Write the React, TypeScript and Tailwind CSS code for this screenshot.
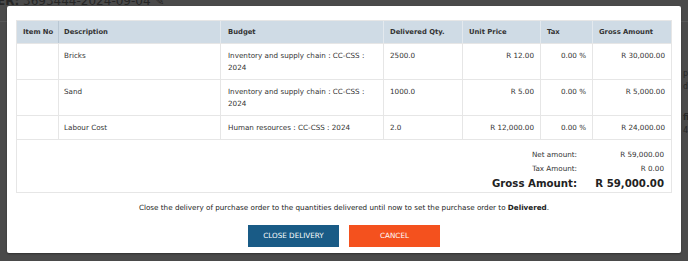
import React from 'react';

interface LineItem {
  itemNo: string;
  description: string;
  budget: string;
  qty: string;
  unitPrice: string;
  tax: string;
  gross: string;
}

const items: LineItem[] = [
  {
    itemNo: '',
    description: 'Bricks',
    budget: 'Inventory and supply chain : CC-CSS : 2024',
    qty: '2500.0',
    unitPrice: 'R 12.00',
    tax: '0.00 %',
    gross: 'R 30,000.00',
  },
  {
    itemNo: '',
    description: 'Sand',
    budget: 'Inventory and supply chain : CC-CSS : 2024',
    qty: '1000.0',
    unitPrice: 'R 5.00',
    tax: '0.00 %',
    gross: 'R 5,000.00',
  },
  {
    itemNo: '',
    description: 'Labour Cost',
    budget: 'Human resources : CC-CSS : 2024',
    qty: '2.0',
    unitPrice: 'R 12,000.00',
    tax: '0.00 %',
    gross: 'R 24,000.00',
  },
];

const font = { fontFamily: '"DejaVu Sans", sans-serif' };

const cols = 'grid grid-cols-[42px_162px_163px_79px_78px_52px_78px]';

export default function App() {
  return (
    <div className="relative h-[261px] w-[688px] overflow-hidden bg-[#4a4a4a]" style={font}>
      {/* page behind the overlay */}
      <div className="absolute left-[-3px] top-[-6px] text-[12px] leading-[14px] text-[#262626] whitespace-nowrap">
        <span className="font-bold">ER:</span> 3693444-2024-09-04 ✎
      </div>
      <div className="absolute left-0 top-[21px] h-px w-full bg-[#575757]" />
      <div className="absolute left-[683px] top-[67px] text-[8px] leading-[13px] text-[#262626]">
        <div>pa</div>
        <div>de</div>
        <div className="mt-[18px] font-bold">fi</div>
        <div>4</div>
      </div>

      {/* modal */}
      <div className="absolute left-[7px] top-[6px] w-[674px] h-[247px] rounded-[2px] bg-white shadow-[0_1px_2px_rgba(0,0,0,0.35)] px-[9px] pt-[14px]">
        <div className="border border-[#e6e6e6] text-[#333] text-[7.2px]">
          <div className={`${cols} bg-[#cfdbe5] font-bold text-[6.8px] leading-[12px] whitespace-nowrap`}>
            <div className="px-[6px] py-[5px] border-r border-[#b9c7d3]">Item No</div>
            <div className="px-[5px] py-[5px] border-r border-[#e3e9ee]">Description</div>
            <div className="px-[7px] py-[5px] border-r border-[#e3e9ee]">Budget</div>
            <div className="px-[6px] py-[5px] border-r border-[#e3e9ee]">Delivered Qty.</div>
            <div className="px-[6px] py-[5px] border-r border-[#e3e9ee]">Unit Price</div>
            <div className="px-[6px] py-[5px] border-r border-[#e3e9ee]">Tax</div>
            <div className="px-[6px] py-[5px]">Gross Amount</div>
          </div>
          {items.map((it) => (
            <div key={it.description} className={`${cols} border-t border-[#e6e6e6] leading-[12px]`}>
              <div className="px-[6px] pt-[6px] pb-[5px] border-r border-[#e6e6e6]">{it.itemNo}</div>
              <div className="px-[5px] pt-[6px] pb-[5px] border-r border-[#e6e6e6]">{it.description}</div>
              <div className="px-[7px] pt-[6px] pb-[5px] border-r border-[#e6e6e6]">{it.budget}</div>
              <div className="px-[6px] pt-[6px] pb-[5px] border-r border-[#e6e6e6]">{it.qty}</div>
              <div className="px-[6px] pt-[6px] pb-[5px] border-r border-[#e6e6e6] text-right">{it.unitPrice}</div>
              <div className="px-[6px] pt-[6px] pb-[5px] border-r border-[#e6e6e6] text-right">{it.tax}</div>
              <div className="px-[6px] pt-[6px] pb-[5px] text-right">{it.gross}</div>
            </div>
          ))}
          <div className="border-t border-[#e6e6e6] pt-[8px] pb-[1px] pr-[7px] flex flex-col items-end">
            <div className="flex leading-[14px]">
              <div className="text-right">Net amount:</div>
              <div className="w-[87px] text-right">R 59,000.00</div>
            </div>
            <div className="flex leading-[14px]">
              <div className="text-right">Tax Amount:</div>
              <div className="w-[87px] text-right">R 0.00</div>
            </div>
            <div className="flex leading-[15px] font-bold text-[10.2px] text-[#222]">
              <div className="text-right">Gross Amount:</div>
              <div className="w-[87px] text-right">R 59,000.00</div>
            </div>
          </div>
        </div>

        <p className="mt-[9px] text-center text-[7.2px] leading-[12px] text-[#222]">
          Close the delivery of purchase order to the quantities delivered until now to set the purchase order to{' '}
          <span className="font-bold">Delivered</span>.
        </p>

        <div className="mt-[11px] flex justify-center gap-[10px]">
          <button
            type="button"
            className="w-[91px] h-[22px] bg-[#195b86] text-white text-[7.2px] uppercase"
          >
            Close Delivery
          </button>
          <button
            type="button"
            className="w-[91px] h-[22px] bg-[#f4511e] text-white text-[7.2px] uppercase"
          >
            Cancel
          </button>
        </div>
      </div>
    </div>
  );
}
